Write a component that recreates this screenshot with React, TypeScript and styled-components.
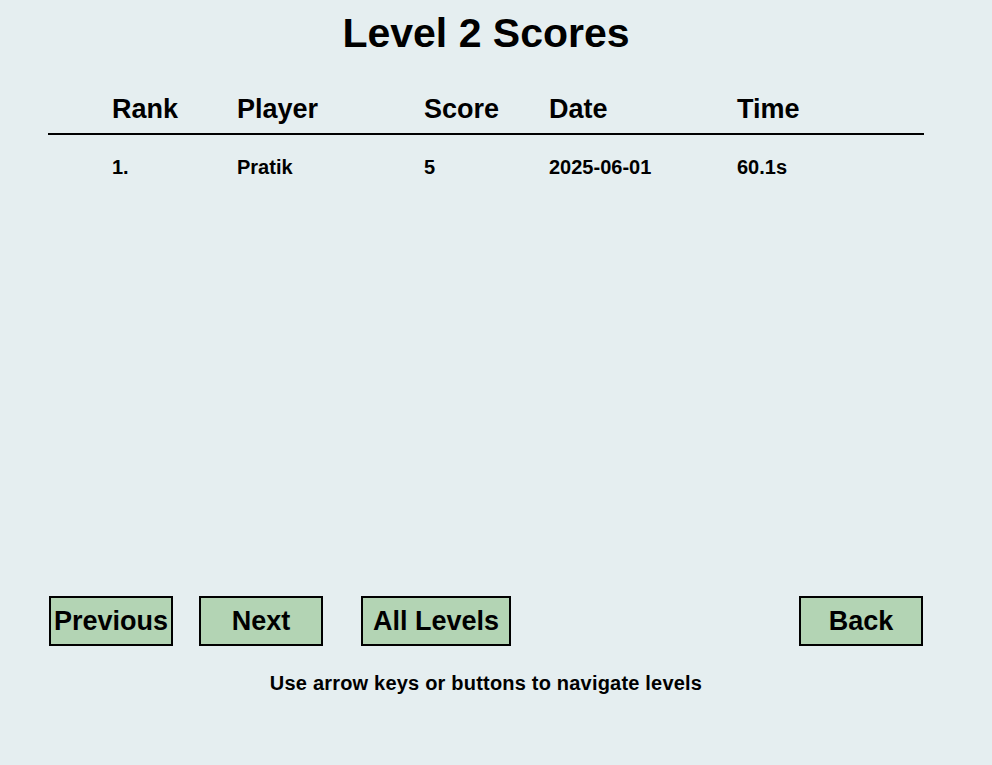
import React from "react";
import styled, { createGlobalStyle } from "styled-components";

const Global = createGlobalStyle`
  html, body { margin: 0; padding: 0; background: #e5eef0; }
  body { font-family: "Liberation Sans", Arial, sans-serif; color: #000; }
`;

const Screen = styled.div`
  width: 992px;
  height: 765px;
  display: flex;
  flex-direction: column;
  box-sizing: border-box;
  padding: 0 68px 70px 48px;
  background: #e5eef0;
`;

const Title = styled.h1`
  margin: 0;
  font-size: 41px;
  line-height: 66px;
  font-weight: 700;
  text-align: center;
`;

const Grid = styled.div<{ $header?: boolean }>`
  display: grid;
  grid-template-columns: 125px 187px 125px 188px 1fr;
  padding-left: 64px;
  align-items: center;
  font-weight: 700;
  font-size: ${(p) => (p.$header ? "27px" : "20px")};
  height: ${(p) => (p.$header ? "44px" : "64px")};
  line-height: ${(p) => (p.$header ? "40px" : "64px")};
  margin-top: ${(p) => (p.$header ? "23px" : "0")};
  border-bottom: ${(p) => (p.$header ? "2px solid #000" : "none")};
  align-content: start;
`;

const Cell = styled.span`
  white-space: nowrap;
`;

const Buttons = styled.div`
  margin-top: auto;
  display: flex;
  align-items: center;
  padding: 0 1px 0 1px;
`;

const Button = styled.button<{ $w: number; $gap?: number; $push?: boolean }>`
  box-sizing: border-box;
  width: ${(p) => p.$w}px;
  height: 50px;
  margin-left: ${(p) => (p.$push ? "auto" : `${p.$gap ?? 0}px`)};
  background: #b3d4b4;
  border: 2px solid #000;
  padding: 0;
  font-family: "Liberation Sans", Arial, sans-serif;
  font-weight: 700;
  font-size: 27px;
  color: #000;
  display: flex;
  align-items: center;
  justify-content: center;
  white-space: nowrap;
  cursor: pointer;
`;

const Hint = styled.p`
  margin: 25px 0 0;
  font-size: 20px;
  line-height: 24px;
  letter-spacing: 0.2px;
  font-weight: 700;
  text-align: center;
`;

const rows = [{ rank: "1.", player: "Pratik", score: "5", date: "2025-06-01", time: "60.1s" }];

export default function App() {
  return (
    <>
      <Global />
      <Screen>
        <Title>Level 2 Scores</Title>
        <Grid $header>
          <Cell>Rank</Cell>
          <Cell>Player</Cell>
          <Cell>Score</Cell>
          <Cell>Date</Cell>
          <Cell>Time</Cell>
        </Grid>
        {rows.map((r) => (
          <Grid key={r.rank}>
            <Cell>{r.rank}</Cell>
            <Cell>{r.player}</Cell>
            <Cell>{r.score}</Cell>
            <Cell>{r.date}</Cell>
            <Cell>{r.time}</Cell>
          </Grid>
        ))}
        <Buttons>
          <Button $w={124}>Previous</Button>
          <Button $w={124} $gap={26}>Next</Button>
          <Button $w={150} $gap={38}>All Levels</Button>
          <Button $w={124} $push>Back</Button>
        </Buttons>
        <Hint>Use arrow keys or buttons to navigate levels</Hint>
      </Screen>
    </>
  );
}
